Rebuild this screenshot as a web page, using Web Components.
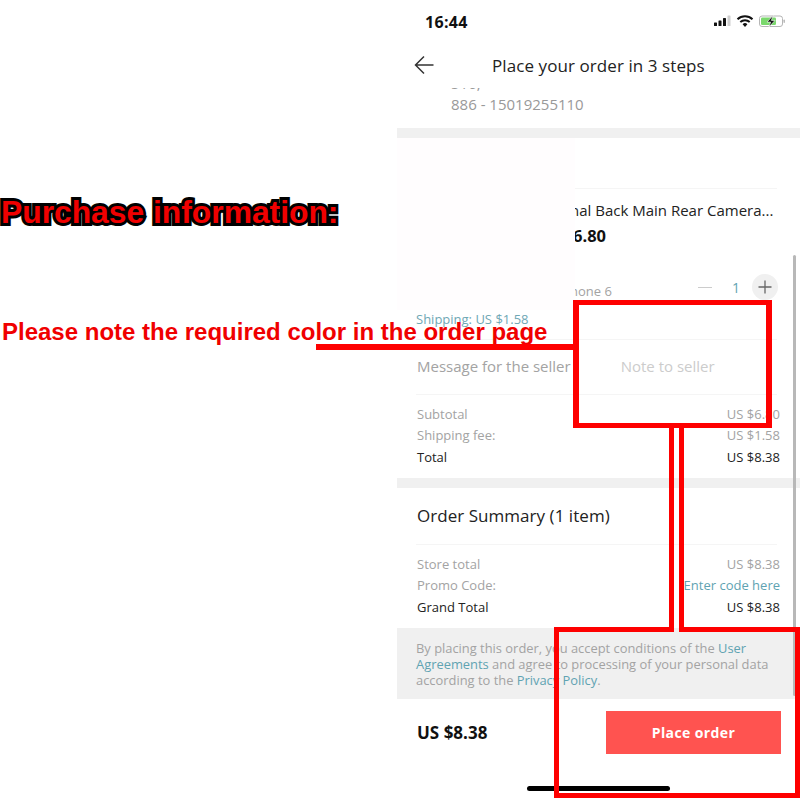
<!DOCTYPE html>
<html lang="en">
  <head>
    <meta charset="UTF-8" />
    <title>Place your order</title>
    <style>
      html, body { margin: 0; background: #fff; }
      body { font-family: "Open Sans", sans-serif; }
      .page { position: relative; width: 800px; height: 800px; overflow: hidden; display: grid; grid-template-columns: 397px 403px; }
      .phone { grid-column: 2; display: flex; flex-direction: column; position: relative; }
    </style>
  </head>
  <body>
    <div class="page">
      <div class="phone">
        <status-bar time="16:44"></status-bar>
        <nav-header title="Place your order in 3 steps"></nav-header>
        <address-block phone="886 - 15019255110"></address-block>
        <gray-band></gray-band>
        <product-card></product-card>
        <gray-band></gray-band>
        <order-summary></order-summary>
        <legal-note></legal-note>
        <checkout-bar total="US $8.38"></checkout-bar>
        <scroll-thumb></scroll-thumb>
      </div>
      <note-layer></note-layer>
    </div>

    <script>
      class StatusBar extends HTMLElement {
        constructor() {
          super();
          this.attachShadow({ mode: "open" });
          this.shadowRoot.innerHTML = `
            <style>
              :host { display: flex; height: 44px; align-items: center; padding: 0 15px 0 28px; color: #111; }
              .time { font-size: 16px; font-weight: 700; letter-spacing: .3px; margin-top: -1px; flex: 1; }
              svg { display: block; margin-top: -3px; }
            </style>
            <span class="time"></span>
            <svg width="72" height="14" viewBox="0 0 72 14">
              <rect x="1" y="8.5" width="3" height="3.5" rx=".6" fill="#111"/>
              <rect x="5.5" y="6.5" width="3" height="5.5" rx=".6" fill="#111"/>
              <rect x="10" y="4" width="3" height="8" rx=".6" fill="#111"/>
              <rect x="14.5" y="1.5" width="3" height="10.5" rx=".6" fill="#cfcfcf"/>
              <path d="M24.5 5.2a11 11 0 0 1 15 0" fill="none" stroke="#111" stroke-width="2"/>
              <path d="M27.3 8a7 7 0 0 1 9.4 0" fill="none" stroke="#111" stroke-width="2"/>
              <path d="M32 13l-2.4-2.7a3.4 3.4 0 0 1 4.8 0z" fill="#111"/>
              <rect x="46.5" y="2" width="23" height="10.5" rx="2.5" fill="none" stroke="#b5b5b5"/>
              <rect x="48" y="3.5" width="15" height="7.5" rx="1.2" fill="#7ad86c"/>
              <rect x="70.5" y="5.5" width="1.4" height="3.5" rx=".7" fill="#b5b5b5"/>
              <path d="M60 1.5l-6 6.6h3.6L56 13l6-6.6h-3.6z" fill="#111" stroke="#fff" stroke-width=".6"/>
            </svg>
          `;
          this.shadowRoot.querySelector(".time").textContent = this.getAttribute("time");
        }
      }
      customElements.define("status-bar", StatusBar);

      class NavHeader extends HTMLElement {
        constructor() {
          super();
          this.attachShadow({ mode: "open" });
          this.shadowRoot.innerHTML = `
            <style>
              :host { display: flex; height: 44px; align-items: center; padding-left: 17px; color: #222; }
              svg { display: block; flex: none; margin-top: -2px; }
              span { font-size: 17px; margin: -2px 0 0 58px; white-space: nowrap; letter-spacing: .08px; }
            </style>
            <svg width="20" height="20" viewBox="0 0 20 20" fill="none" stroke="#333" stroke-width="1.5">
              <path d="M19.5 10H1.5M10 1.5L1.5 10l8.5 8.5"/>
            </svg>
            <span></span>
          `;
          this.shadowRoot.querySelector("span").textContent = this.getAttribute("title");
        }
      }
      customElements.define("nav-header", NavHeader);

      class AddressBlock extends HTMLElement {
        constructor() {
          super();
          this.attachShadow({ mode: "open" });
          this.shadowRoot.innerHTML = `
            <style>
              :host { display: block; height: 40px; overflow: hidden; padding-left: 54px; color: #999; font-size: 15px; line-height: 20px; }
              .cut { margin-top: -15px; }
              div { white-space: nowrap; }
              .phone { margin-top: 1px; }
            </style>
            <div class="cut">516,</div>
            <div class="phone"></div>
          `;
          this.shadowRoot.querySelector(".phone").textContent = this.getAttribute("phone");
        }
      }
      customElements.define("address-block", AddressBlock);

      class GrayBand extends HTMLElement {
        constructor() {
          super();
          this.attachShadow({ mode: "open" });
          this.shadowRoot.innerHTML = `<style>:host { display: block; height: 10px; background: #f0f0f0; }</style>`;
        }
      }
      customElements.define("gray-band", GrayBand);

      class PriceRow extends HTMLElement {
        constructor() {
          super();
          this.attachShadow({ mode: "open" });
          this.shadowRoot.innerHTML = `
            <style>
              :host { display: flex; justify-content: space-between; align-items: center; height: 21.5px; font-size: 13px; color: #a3a3a3; padding-left: 1px; }
              :host([strong]) { color: #222; }
              .value.link { color: #5fa3b2; }
            </style>
            <span><slot></slot></span>
            <span class="value"></span>
          `;
          const value = this.shadowRoot.querySelector(".value");
          value.textContent = this.getAttribute("value");
          if (this.hasAttribute("link")) value.classList.add("link");
        }
      }
      customElements.define("price-row", PriceRow);

      class ProductCard extends HTMLElement {
        constructor() {
          super();
          this.attachShadow({ mode: "open" });
          this.shadowRoot.innerHTML = `
            <style>
              :host { display: block; height: 340px; }
              .top { display: flex; height: 172px; }
              .patch { width: 178px; flex: none; background: #fffdfe; }
              .info { flex: 1; overflow: hidden; padding-top: 50px; white-space: nowrap; box-sizing: border-box; position: relative; }
              .rule { height: 1px; background: #f5f5f5; width: 202px; }
              .title { font-size: 15px; line-height: 20px; color: #222; margin: 11px 0 0 -5px; }
              .price { font-size: 16.5px; font-weight: 700; line-height: 20px; color: #111; margin: 6px 0 0 -2px; }
              .variant { display: flex; align-items: center; height: 28px; margin-top: 27px; width: 203px; }
              .color { font-size: 13px; color: #a3a3a3; margin: 8px 0 0 -5px; flex: 1; }
              .minus { width: 14px; height: 1px; background: #ccc; }
              .qty { font-size: 14px; color: #5fa3b2; margin-left: 20px; width: 10px; }
              .plus { width: 26px; height: 26px; border-radius: 50%; background: #f0f0f0; margin-left: 10px; flex: none; display: block; }
              .body { padding: 0 20px 0 19px; }
              .shipping { font-size: 13px; line-height: 18px; color: #6fa8b5; }
              .hr { height: 1px; background: #f5f5f5; margin-top: 11px; width: 361px; }
              .message { display: flex; align-items: center; height: 52px; padding: 0 0 2px 1px; font-size: 15px; color: #a3a3a3; }
              .message .hint { margin-left: 50px; color: #ccc; }
              .rows { margin-top: 8px; }
            </style>
            <div class="top">
              <div class="patch"></div>
              <div class="info">
                <div class="rule"></div>
                <div class="title">nal Back Main Rear Camera...</div>
                <div class="price">6.80</div>
                <div class="variant">
                  <span class="color">hone 6</span>
                  <span class="minus"></span>
                  <span class="qty">1</span>
                  <svg class="plus" viewBox="0 0 26 26" fill="none" stroke="#666" stroke-width="1.3"><path d="M6.5 13h13M13 6.5v13"/></svg>
                </div>
              </div>
            </div>
            <div class="body">
              <div class="shipping">Shipping: US $1.58</div>
              <div class="hr"></div>
              <div class="message"><span>Message for the seller</span><span class="hint">Note to seller</span></div>
              <div class="hr" style="margin-top:0"></div>
              <div class="rows">
                <price-row value="US $6.80">Subtotal</price-row>
                <price-row value="US $1.58">Shipping fee:</price-row>
                <price-row value="US $8.38" strong>Total</price-row>
              </div>
            </div>
          `;
        }
      }
      customElements.define("product-card", ProductCard);

      class OrderSummary extends HTMLElement {
        constructor() {
          super();
          this.attachShadow({ mode: "open" });
          this.shadowRoot.innerHTML = `
            <style>
              :host { display: block; height: 140px; padding: 0 20px 0 19px; }
              h2 { margin: 0 0 0 1px; height: 56px; line-height: 56px; font-size: 17px; font-weight: 400; color: #222; letter-spacing: .04px; }
              .hr { height: 1px; background: #f5f5f5; width: 361px; }
              .rows { margin-top: 8px; }
            </style>
            <h2>Order Summary (1 item)</h2>
            <div class="hr"></div>
            <div class="rows">
              <price-row value="US $8.38">Store total</price-row>
              <price-row value="Enter code here" link>Promo Code:</price-row>
              <price-row value="US $8.38" strong>Grand Total</price-row>
            </div>
          `;
        }
      }
      customElements.define("order-summary", OrderSummary);

      class LegalNote extends HTMLElement {
        constructor() {
          super();
          this.attachShadow({ mode: "open" });
          this.shadowRoot.innerHTML = `
            <style>
              :host { display: block; height: 71px; box-sizing: border-box; padding: 12px 0 0 19px; background: #f0f0f0; color: #a3a3a3; font-size: 12.9px; line-height: 16px; white-space: nowrap; }
              a { color: #5fa3b2; }
            </style>
            By placing this order, you accept conditions of the <a>User</a><br>
            <a>Agreements</a> and agree to processing of your personal data<br>
            according to the <a>Privacy Policy</a>.
          `;
        }
      }
      customElements.define("legal-note", LegalNote);

      class CheckoutBar extends HTMLElement {
        constructor() {
          super();
          this.attachShadow({ mode: "open" });
          this.shadowRoot.innerHTML = `
            <style>
              :host { display: flex; flex-direction: column; height: 101px; box-sizing: border-box; padding-top: 12px; }
              .row { display: flex; justify-content: space-between; align-items: center; padding: 0 19px 0 20px; }
              .total { font-size: 17px; font-weight: 700; color: #111; }
              button { width: 175px; height: 43px; border: 0; padding: 0; background: #ff5350; color: #fff; font: 700 14px "Open Sans", sans-serif; letter-spacing: .4px; }
              .home { width: 143px; height: 5px; border-radius: 3px; background: #000; margin: 32px 0 0 130px; }
            </style>
            <div class="row">
              <span class="total"></span>
              <button>Place order</button>
            </div>
            <div class="home"></div>
          `;
          this.shadowRoot.querySelector(".total").textContent = this.getAttribute("total");
        }
      }
      customElements.define("checkout-bar", CheckoutBar);

      // thin scroll indicator that sits over the content
      class ScrollThumb extends HTMLElement {
        constructor() {
          super();
          this.attachShadow({ mode: "open" });
          this.shadowRoot.innerHTML = `<style>:host { position: absolute; left: 396px; top: 255px; width: 3px; height: 441px; background: #b8b8b8; border-radius: 2px; }</style>`;
        }
      }
      customElements.define("scroll-thumb", ScrollThumb);

      // red annotations drawn over the whole screenshot
      class NoteLayer extends HTMLElement {
        constructor() {
          super();
          this.attachShadow({ mode: "open" });
          this.shadowRoot.innerHTML = `
            <style>
              :host { position: absolute; inset: 0; font-family: "Liberation Sans", Arial, sans-serif; font-weight: 700; color: #f00000; pointer-events: none; }
              .head { position: absolute; left: 1px; top: 193px; font-size: 31.8px; line-height: 38px; white-space: nowrap; color: #f00000; -webkit-text-stroke: 6px #000; paint-order: stroke fill; }
              .line { position: absolute; left: 2px; top: 317px; font-size: 24px; line-height: 30px; white-space: nowrap; }
              svg { position: absolute; inset: 0; }
            </style>
            <div class="head">Purchase information:</div>
            <div class="line">Please note the required color in the order page</div>
            <svg width="800" height="800" viewBox="0 0 800 800" fill="#fe0000">
              <rect x="316" y="344" width="258" height="6"/>
              <path fill-rule="evenodd" d="M573 300h199v128H573zM579 305v118h187V305z"/>
              <rect x="669" y="423" width="5" height="209"/>
              <rect x="679" y="423" width="5" height="209"/>
              <rect x="669" y="423" width="15" height="5"/>
              <path fill-rule="evenodd" d="M554 627h120v5H559v161h236V632H679v-5h121v171H554z"/>
            </svg>
          `;
        }
      }
      customElements.define("note-layer", NoteLayer);
    </script>
  </body>
</html>
